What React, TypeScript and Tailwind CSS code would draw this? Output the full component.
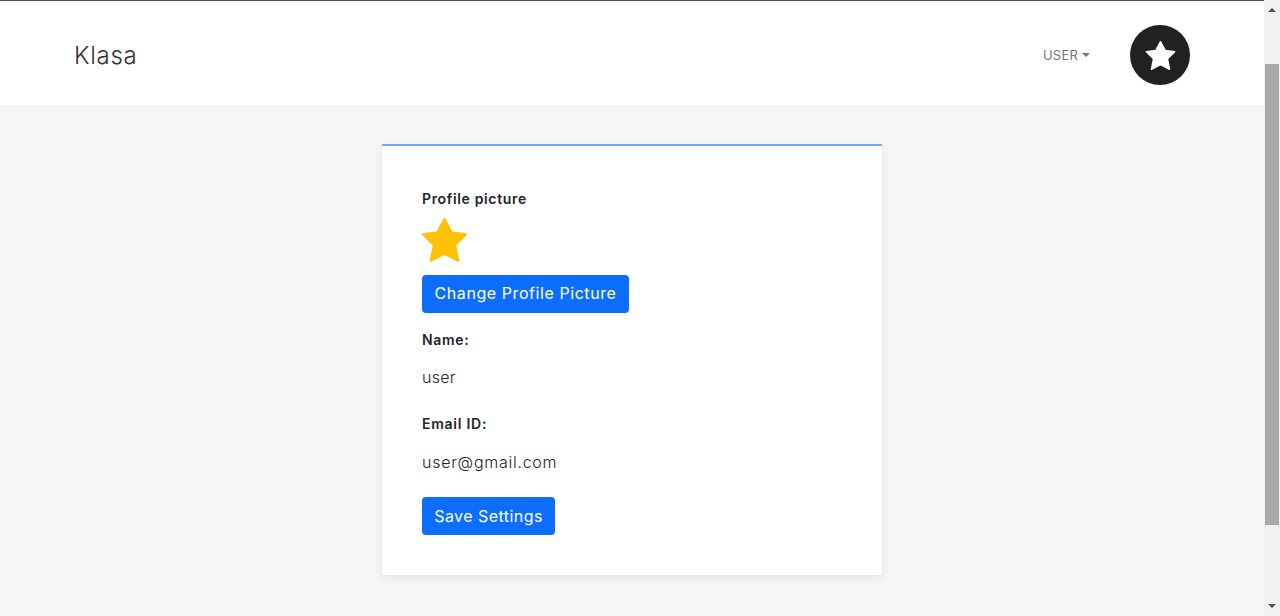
function Star({ className }: { className: string }) {
  return (
    <svg className={className} viewBox="0 0 44 43" fill="currentColor" stroke="currentColor" strokeWidth="2" strokeLinejoin="round">
      <polygon points="22,1 29,14 43,16 32.5,26.5 35.5,42 22,35 8.5,42 11.5,26.5 1,16 15,14" />
    </svg>
  );
}

export default function App() {
  return (
    <div className="flex h-[616px] overflow-hidden bg-[#f6f6f6] font-['Inter',sans-serif] text-[#212529]">
      <div className="flex-1 flex flex-col">
        <div className="h-px bg-[#555]" />
        <header className="h-[104px] bg-white flex items-center pt-[4px] pl-[74px] pr-[74px]">
          <span className="mt-[2px] text-[24px] font-light text-[#333] tracking-[0.7px]">Klasa</span>
          <div className="ml-auto flex items-center">
            <span className="mt-[2px] text-[13px] text-[#777] tracking-[0.2px]">USER</span>
            <span className="ml-[4px] mb-[1px] w-0 h-0 border-x-[4px] border-x-transparent border-t-[4px] border-t-[#777]" />
            <div className="ml-[40px] w-[60px] h-[60px] rounded-full bg-[#212121] flex items-center justify-center">
              <Star className="text-white w-[31px] h-[29px]" />
            </div>
          </div>
        </header>

        <main className="flex-1 pt-[39px] pl-[382px]">
          <div className="w-[500px] h-[431px] bg-white border-t-2 border-[#6ea8fe] shadow-[0_2px_10px_rgba(0,0,0,0.08)] px-[40px] pt-[41px]">
            <p className="text-[14px] leading-[24px] font-semibold tracking-[0.65px]">Profile picture</p>
            <Star className="mt-[7px] block w-[45px] h-[44px] text-[#ffc107]" />
            <button className="mt-[13px] block h-[38px] w-[207px] pb-[2px] rounded-[4px] bg-[#0d6efd] text-white text-[16px] tracking-[0.57px]">Change Profile Picture</button>
            <p className="mt-[15px] text-[14px] leading-[24px] font-semibold tracking-[0.65px]">Name:</p>
            <p className="mt-[13px] text-[16px] leading-[24px] font-light tracking-[0.3px]">user</p>
            <p className="mt-[23px] text-[14px] leading-[24px] font-semibold tracking-[0.75px]">Email ID:</p>
            <p className="mt-[14px] text-[16px] leading-[24px] font-light tracking-[0.73px]">user@gmail.com</p>
            <button className="mt-[23px] block h-[38px] w-[133px] rounded-[4px] bg-[#0d6efd] text-white text-[16px] tracking-[0.45px]">Save Settings</button>
          </div>
        </main>
      </div>

      <aside className="w-[16px] bg-[#f1f1f1] flex flex-col items-center">
        <span className="mt-[8px] w-0 h-0 border-x-[4px] border-x-transparent border-b-[4px] border-b-[#505050]" />
        <div className="mt-[52px] w-[14px] h-[461px] bg-[#a8a8a8]" />
        <span className="mt-[79px] w-0 h-0 border-x-[4px] border-x-transparent border-t-[4px] border-t-[#505050]" />
      </aside>
    </div>
  );
}
